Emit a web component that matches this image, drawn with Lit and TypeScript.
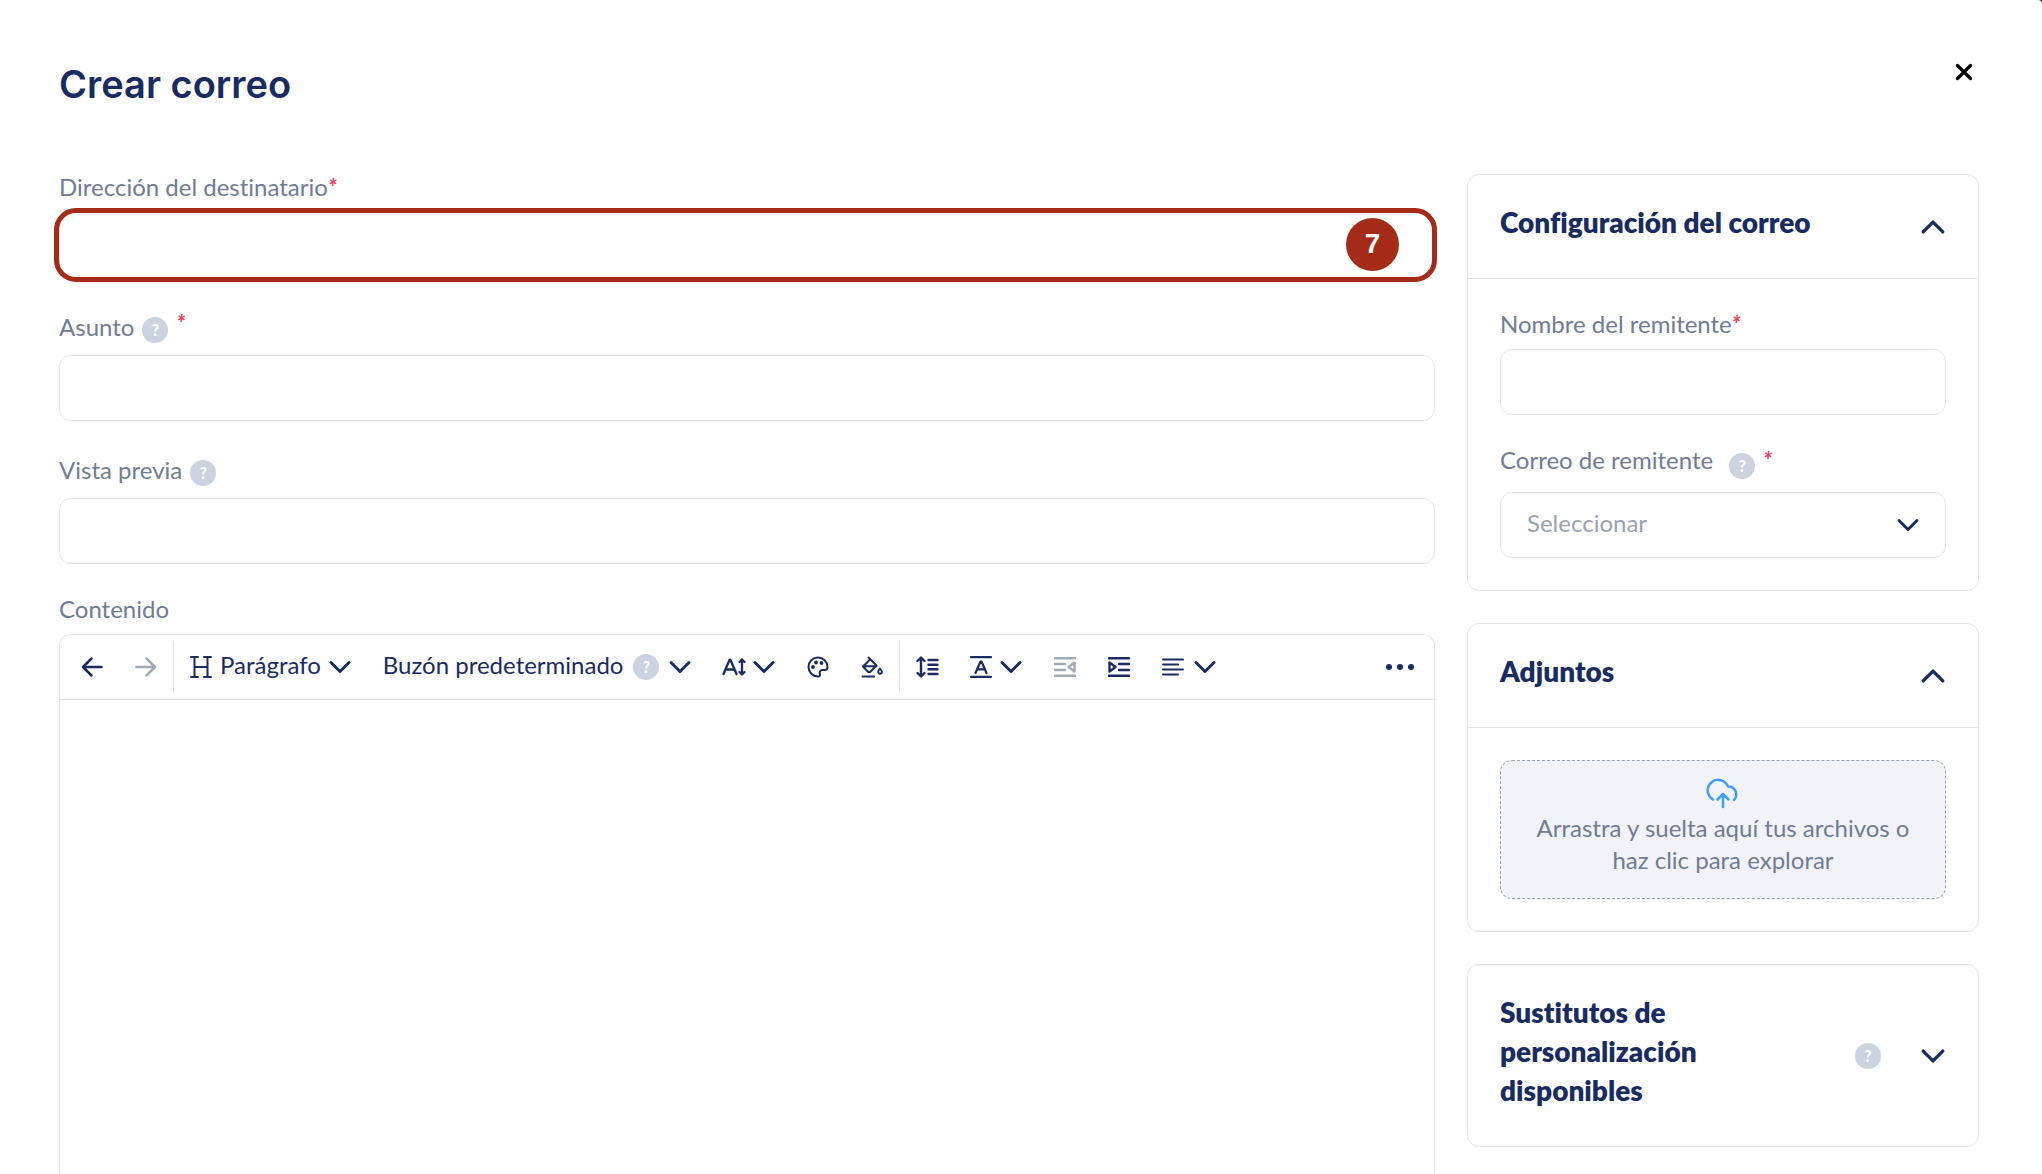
import { LitElement, html, css, svg, nothing, type TemplateResult } from "lit";
import { customElement, property } from "lit/decorators.js";

const ICONS: Record<string, TemplateResult> = {
  back: svg`<path d="M20.500 11H2.500M10.500 2.500L2 11l8.500 8.500" />`,
  forward: svg`<path d="M1.500 11h18M11.500 2.500L20 11l-8.500 8.500" />`,
  heading: svg`<g stroke-width="2"><path d="M4.500 1v20M17.500 1v20M4.500 11h13M1 1h7M14 1h7M1 21h7M14 21h7" /></g>`,
  down: svg`<path d="M2 6.500l9 9 9-9" stroke-width="3" />`,
  up: svg`<path d="M2 15.500l9-9 9 9" stroke-width="3" />`,
  size: svg`<g stroke-width="2.300"><path d="M.5 18L6.500 4h1l6 14M3 13.500h8.500M19 4v14" /><path d="M16.500 6L19 3.500l2.500 2.500M16.500 16L19 18.500l2.500-2.500" /></g>`,
  palette: svg`<g stroke-width="2"><path d="M11 1.500a9.500 9.500 0 1 0 0 19c1.800 0 2.400-1.100 1.900-2.600-.6-2 .3-3.900 2.600-3.900h2.500c1.600 0 2.500-1.200 2.500-3 0-5.200-4.300-9.500-9.500-9.500z" /></g><g fill="currentColor" stroke="none"><circle cx="6" cy="11" r="1.900" /><circle cx="9" cy="6.500" r="1.900" /><circle cx="14.500" cy="7" r="1.900" /></g>`,
  bucket: svg`<g stroke-width="2"><path d="M7.500 1.500l8 8-5.800 6a2 2 0 0 1-2.900 0L2 10.500 8.500 4M2 10.200h13.500M1.500 20.500H13" /><path d="M19 12.500c1.300 1.700 1.900 2.500 1.900 3.300a1.900 1.900 0 0 1-3.800 0c0-.8.6-1.600 1.900-3.300z" /></g>`,
  spacing: svg`<g stroke-width="2.400"><path d="M5 2v18M1.500 5L5 1.500 8.500 5M1.500 17L5 20.500 8.500 17M12.500 4h9M12.500 8.700h9M12.500 13.300h9M12.500 18h9" /></g>`,
  letter: svg`<g stroke-width="2.200"><path d="M1 1.200h20M1 20.800h20M5.500 17L10.500 5.500h1L16.500 17M7.500 13.300h7" /></g>`,
  outdent: svg`<g stroke-width="2.400"><path d="M1 2.200h20M1 8h10M1 14h10M1 19.800h20M20.500 6.500v9L14.500 11z" /></g>`,
  indent: svg`<g stroke-width="2.400"><path d="M1 2.200h20M11 8h10M11 14h10M1 19.800h20M1.500 6.500v9L7.500 11z" /></g>`,
  align: svg`<g stroke-width="2"><path d="M1 3.500h20M1 8.500h15M1 13.500h20M1 18.500h15" /></g>`,
  close: svg`<path d="M4.500 4.500l13 13M17.500 4.500l-13 13" stroke-width="3.200" />`,
};

function icon(name: string, cls = "") {
  return html`<svg class="icon ${cls}" viewBox="0 0 22 22" aria-hidden="true">${ICONS[name]}</svg>`;
}

const shared = css`
  *, *::before, *::after { box-sizing: border-box; }
  .icon {
    display: block;
    flex: none;
    width: 22px;
    height: 22px;
    fill: none;
    stroke: currentColor;
    stroke-width: 2.500;
    stroke-linecap: round;
    stroke-linejoin: round;
    overflow: visible;
  }
  button {
    border: 0;
    padding: 0;
    background: none;
    color: inherit;
    font: inherit;
    cursor: pointer;
  }
`;

@customElement("help-mark")
class HelpMark extends LitElement {
  static styles = css`
    :host {
      display: grid;
      place-items: center;
      flex: none;
      width: 26px;
      height: 26px;
      border-radius: 50%;
      background: #cbd3e0;
      color: #fff;
      font: 900 16px/26px Lato, "Liberation Sans", sans-serif;
    }
  `;
  render() {
    return html`?`;
  }
}

@customElement("side-card")
class SideCard extends LitElement {
  @property() heading = "";
  @property({ type: Boolean }) open = false;
  @property({ type: Boolean }) help = false;

  static styles = [
    shared,
    css`
      :host {
        display: block;
        border: 1px solid #e1e4e8;
        border-radius: 12px;
      }
      .head {
        display: flex;
        align-items: center;
        padding: 28px 32px 32px;
      }
      .head.open { border-bottom: 1px solid #e1e4e8; }
      .title {
        flex: 1;
        margin: 0;
        padding-bottom: 4px;
        font-size: 28px;
        font-weight: 800;
        line-height: 39px;
      }
      .title span { display: block; max-width: 240px; }
      .title.wide span { max-width: none; }
      .toggle, help-mark { margin-top: 4px; }
      .toggle { margin-left: 39px; }
      .toggle .icon { width: 26px; height: 24px; }
      .body { padding: 30px 32px 32px; }
    `,
  ];

  render() {
    return html`
      <header class="head ${this.open ? "open" : ""}">
        <h2 class="title ${this.help ? "" : "wide"}"><span>${this.heading}</span></h2>
        ${this.help ? html`<help-mark></help-mark>` : nothing}
        <button class="toggle" aria-label=${this.heading} aria-expanded=${this.open}
          @click=${() => (this.open = !this.open)}>
          ${icon(this.open ? "up" : "down")}
        </button>
      </header>
      ${this.open ? html`<div class="body"><slot></slot></div>` : nothing}
    `;
  }
}

@customElement("app-root")
class AppRoot extends LitElement {
  static styles = [
    shared,
    css`
      :host {
        display: block;
        background: #14213d;
        color: #192b60;
        font-family: Lato, "Liberation Sans", sans-serif;
        font-size: 24px;
        font-variant-ligatures: none;
      }
      .panel {
        display: flex;
        flex-direction: column;
        min-height: 100vh;
        padding: 60px 63px 0 59px;
        border-top-right-radius: 4px;
        background: #fff;
      }
      .top {
        display: flex;
        justify-content: space-between;
        align-items: flex-start;
        margin-bottom: 64px;
      }
      .page-title {
        margin: 0;
        font-family: Inter, "Liberation Sans", sans-serif;
        font-size: 38px;
        font-weight: 600;
        line-height: 48px;
      }
      .close {
        display: grid;
        place-items: center;
        width: 30px;
        height: 24px;
        color: #000;
      }
      .columns {
        flex: 1;
        display: grid;
        grid-template-columns: minmax(0, 1fr) 512px;
        gap: 32px;
      }
      .form {
        display: flex;
        flex-direction: column;
        gap: 30px;
      }
      .side {
        display: flex;
        flex-direction: column;
        gap: 32px;
        padding-top: 2px;
      }
      .fields {
        display: flex;
        flex-direction: column;
        gap: 30px;
      }
      .field {
        display: flex;
        flex-direction: column;
        gap: 8px;
      }
      .field.grow { flex: 1; }
      .label-row {
        display: flex;
        align-items: center;
        height: 32px;
        color: #6f7c94;
        line-height: 30px;
      }
      .label-row label { padding-bottom: 2px; }
      .label-row.tall { height: 39px; gap: 8px; }
      .label-row.start { align-items: flex-start; gap: 16px; }
      .label-row.start .star { margin-left: -8px; }
      .label-row help-mark { margin-top: 4px; }
      .label-row.start help-mark { margin-top: 8px; }
      .star {
        align-self: flex-start;
        color: #f03e5e;
        font-size: 22px;
        font-style: italic;
        font-weight: 900;
      }
      .control { position: relative; display: flex; }
      .input {
        width: 100%;
        height: 66px;
        padding: 0 26px 6px;
        border: 1px solid #e1e4e8;
        border-radius: 12px;
        outline: 0;
        background: #fff;
        color: #192b60;
        font: inherit;
      }
      .select { appearance: none; color: #98a2b5; cursor: pointer; }
      .select-arrow {
        position: absolute;
        top: 22px;
        right: 27px;
        pointer-events: none;
      }
      .mark {
        position: absolute;
        inset: -4px -2px -4px -5px;
        border: 5px solid #a52a18;
        border-radius: 22px;
        pointer-events: none;
      }
      .step {
        position: absolute;
        top: 6px;
        right: 36px;
        width: 53px;
        height: 53px;
        border-radius: 50%;
        background: #a52a18;
        color: #fff;
        font: 700 28px/52px "Liberation Sans", sans-serif;
        text-align: center;
      }
      .editor {
        flex: 1;
        display: flex;
        flex-direction: column;
        border: 1px solid #e1e4e8;
        border-bottom: 0;
        border-radius: 12px 12px 0 0;
      }
      .toolbar {
        display: flex;
        align-items: center;
        height: 65px;
        padding: 0 4px 0 5px;
        border-bottom: 1px solid #e1e4e8;
      }
      .tool {
        display: flex;
        align-items: center;
        gap: 8px;
        height: 52px;
        padding: 0 16px;
        white-space: nowrap;
      }
      .tool.spaced { gap: 10px; }
      .tool:disabled { color: #a0aab4; cursor: default; }
      .tool-text { padding-bottom: 6px; }
      .divider {
        width: 1px;
        height: 52px;
        background: #e1e4e8;
      }
      .more {
        display: flex;
        gap: 5px;
        margin-left: auto;
        padding: 16px;
      }
      .dot {
        width: 6px;
        height: 6px;
        border-radius: 50%;
        background: currentColor;
      }
      .canvas {
        flex: 1;
        width: 100%;
        padding: 24px;
        border: 0;
        outline: 0;
        background: transparent;
        font: inherit;
        resize: none;
      }
      .drop {
        display: flex;
        flex-direction: column;
        align-items: center;
        width: 100%;
        margin-top: 2px;
        padding: 16px 24px 22px;
        border: 1px dashed #98a4b3;
        border-radius: 12px;
        background: #f1f3f8;
        color: #6f7c94;
        line-height: 32px;
      }
      .cloud {
        display: block;
        width: 36px;
        height: 35px;
        fill: none;
        stroke: #3f9dff;
        stroke-width: 2.500;
        stroke-linecap: round;
        stroke-linejoin: round;
      }
    `,
  ];

  render() {
    return html`
      <main class="panel">
        <header class="top">
          <h1 class="page-title">Crear correo</h1>
          <button class="close" aria-label="Cerrar">${icon("close")}</button>
        </header>
        <div class="columns">
          <form class="form" @submit=${(e: Event) => e.preventDefault()}>
            <div class="field">
              <div class="label-row">
                <label for="to">Dirección del destinatario</label><span class="star">*</span>
              </div>
              <div class="control">
                <input class="input" id="to" type="text" required />
                <div class="mark"></div>
                <div class="step">7</div>
              </div>
            </div>
            <div class="field">
              <div class="label-row tall">
                <label for="subject">Asunto</label><help-mark></help-mark><span class="star">*</span>
              </div>
              <input class="input" id="subject" type="text" required />
            </div>
            <div class="field">
              <div class="label-row tall">
                <label for="preview">Vista previa</label><help-mark></help-mark>
              </div>
              <input class="input" id="preview" type="text" />
            </div>
            <div class="field grow">
              <div class="label-row"><label for="content">Contenido</label></div>
              <div class="editor">${this.toolbar()}<textarea class="canvas" id="content"></textarea></div>
            </div>
          </form>
          <aside class="side">
            <side-card heading="Configuración del correo" open>
              <div class="fields">
                <div class="field">
                  <div class="label-row">
                    <label for="name">Nombre del remitente</label><span class="star">*</span>
                  </div>
                  <input class="input" id="name" type="text" required />
                </div>
                <div class="field">
                  <div class="label-row tall start">
                    <label for="from">Correo de remitente</label><help-mark></help-mark><span class="star">*</span>
                  </div>
                  <div class="control">
                    <select class="input select" id="from"><option>Seleccionar</option></select>
                    ${icon("down", "select-arrow")}
                  </div>
                </div>
              </div>
            </side-card>
            <side-card heading="Adjuntos" open>
              <button class="drop">
                <svg class="cloud" viewBox="0 0 36 35" aria-hidden="true">
                  <path d="M8 22.500A10.500 10.500 0 1 1 23 9.500a8 8 0 0 1 6 13.500M18 30V17M12.500 22.500L18 17l5.500 5.500" />
                </svg>
                <span>Arrastra y suelta aquí tus archivos o haz clic para explorar</span>
              </button>
            </side-card>
            <side-card heading="Sustitutos de personalización disponibles" help></side-card>
          </aside>
        </div>
      </main>
    `;
  }

  private toolbar() {
    return html`
      <div class="toolbar" role="toolbar">
        <button class="tool" aria-label="Deshacer">${icon("back")}</button>
        <button class="tool" aria-label="Rehacer" disabled>${icon("forward")}</button>
        <span class="divider"></span>
        <button class="tool">
          ${icon("heading")}<span class="tool-text">Parágrafo</span>${icon("down")}
        </button>
        <button class="tool spaced">
          <span class="tool-text">Buzón predeterminado</span><help-mark></help-mark>${icon("down")}
        </button>
        <button class="tool" aria-label="Tamaño">${icon("size")}${icon("down")}</button>
        <button class="tool" aria-label="Color">${icon("palette")}</button>
        <button class="tool" aria-label="Relleno">${icon("bucket")}</button>
        <span class="divider"></span>
        <button class="tool" aria-label="Interlineado">${icon("spacing")}</button>
        <button class="tool" aria-label="Formato">${icon("letter")}${icon("down")}</button>
        <button class="tool" aria-label="Reducir sangría" disabled>${icon("outdent")}</button>
        <button class="tool" aria-label="Aumentar sangría">${icon("indent")}</button>
        <button class="tool spaced" aria-label="Alinear">${icon("align")}${icon("down")}</button>
        <button class="more" aria-label="Más">
          <span class="dot"></span><span class="dot"></span><span class="dot"></span>
        </button>
      </div>
    `;
  }
}
